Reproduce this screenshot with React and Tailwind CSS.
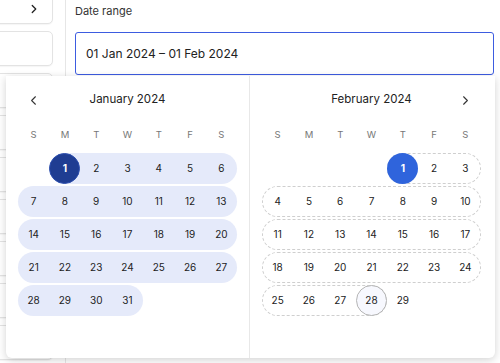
import React from 'react';
import { ChevronLeft, ChevronRight } from 'lucide-react';

const colStart = ['', 'col-start-1', 'col-start-2', 'col-start-3', 'col-start-4', 'col-start-5', 'col-start-6', 'col-start-7'];
const colEnd = ['', 'col-end-2', 'col-end-3', 'col-end-4', 'col-end-5', 'col-end-6', 'col-end-7', 'col-end-8'];

const weekdays = ['S', 'M', 'T', 'W', 'T', 'F', 'S'];

// builds week rows: each row is a list of { day, col }
const buildWeeks = (firstCol, days) => {
  const weeks = [];
  let row = [];
  let col = firstCol;
  for (let d = 1; d <= days; d++) {
    row.push({ day: d, col });
    col++;
    if (col > 7) {
      weeks.push(row);
      row = [];
      col = 1;
    }
  }
  if (row.length) weeks.push(row);
  return weeks;
};

const Week = ({ cells, band, kind, marks }) => (
  <div className="grid h-[31px] grid-cols-7">
    {band && (
      <div
        className={`row-start-1 ${colStart[band[0]]} ${colEnd[band[1]]} rounded-full ${
          kind === 'solid' ? 'bg-[#e5eafa]' : 'border border-dashed border-[#cfcfcf]'
        }`}
      />
    )}
    {cells.map(({ day, col }) => {
      const mark = marks[day];
      let cls = 'text-[#222]';
      if (mark === 'dark') cls = 'bg-[#1f3d92] text-white font-bold border border-[#2d4fae]';
      if (mark === 'blue') cls = 'bg-[#2f64dc] text-white font-bold';
      if (mark === 'today') cls = 'bg-[#f7f8fe] border border-[#b5b5b5] text-[#222]';
      return (
        <div key={day} className={`row-start-1 ${colStart[col]} flex items-center justify-center`}>
          <span className={`flex h-[31px] w-[31px] items-center justify-center rounded-full text-[10px] ${cls}`}>
            {day}
          </span>
        </div>
      );
    })}
  </div>
);

const Month = ({ title, firstCol, days, bands, kind, marks, prev, next }) => {
  const weeks = buildWeeks(firstCol, days);
  return (
    <div className="w-[219px]">
      <div className="grid h-[24px] grid-cols-7 items-center">
        <div className="flex justify-center">
          {prev && <ChevronLeft size={15} strokeWidth={1.7} className="text-[#333]" />}
        </div>
        <div className="col-span-5 text-center text-[11.5px] text-[#222]">{title}</div>
        <div className="flex justify-center">
          {next && <ChevronRight size={15} strokeWidth={1.7} className="text-[#333]" />}
        </div>
      </div>
      <div className="mt-[13px] grid h-[20px] grid-cols-7 items-center">
        {weekdays.map((w, i) => (
          <div key={i} className="text-center text-[9.5px] text-[#777]">
            {w}
          </div>
        ))}
      </div>
      <div className="mt-[8px] flex flex-col gap-[2px]">
        {weeks.map((cells, i) => (
          <Week key={i} cells={cells} band={bands[i]} kind={kind} marks={marks} />
        ))}
      </div>
    </div>
  );
};

export default function App() {
  return (
    <div className="relative h-[363px] w-[500px] overflow-hidden bg-white font-['Inter',sans-serif]">
      <div className="flex h-full">
        <aside className="w-[66px] shrink-0 border-r border-[#e6e6e6] pr-[12px]">
          <div className="-ml-[10px] -mt-[11px] flex flex-col gap-[7px]">
            {Array.from({ length: 9 }).map((_, i) => (
              <div
                key={i}
                className="flex h-[35px] items-center justify-end rounded-r-[5px] border border-[#e3e3e3] bg-white pr-[11px] shadow-[0_1px_1px_rgba(0,0,0,0.04)]"
              >
                {i === 0 && <ChevronRight size={14} strokeWidth={2.2} className="mt-[4px] text-[#222]" />}
              </div>
            ))}
          </div>
        </aside>
        <main className="flex-1 pl-[9px] pr-[6px] pt-[3px]">
          <div className="text-[11px] leading-[16px] text-[#333]">Date range</div>
          <div className="mt-[13px] flex h-[43px] items-center rounded-[3px] border-[1.5px] border-[#3d5ce0] pl-[10px] text-[12px] text-[#222]">
            01 Jan 2024 – 01 Feb 2024
          </div>
        </main>
      </div>

      <div className="absolute left-[6px] top-[76px] flex h-[282px] w-[489px] rounded-b-[6px] bg-white shadow-[0_2px_8px_rgba(0,0,0,0.18)]">
        <div className="w-[244px] border-r border-[#e8e8e8] pl-[12px] pt-[12px]">
          <Month
            title="January 2024"
            firstCol={2}
            days={31}
            kind="solid"
            bands={[[2, 7], [1, 7], [1, 7], [1, 7], [1, 4]]}
            marks={{ 1: 'dark' }}
            prev
          />
        </div>
        <div className="flex-1 pl-[12px] pt-[12px]">
          <Month
            title="February 2024"
            firstCol={5}
            days={29}
            kind="dashed"
            bands={[[5, 7], [1, 7], [1, 7], [1, 7], [1, 4]]}
            marks={{ 1: 'blue', 28: 'today' }}
            next
          />
        </div>
      </div>
    </div>
  );
}
